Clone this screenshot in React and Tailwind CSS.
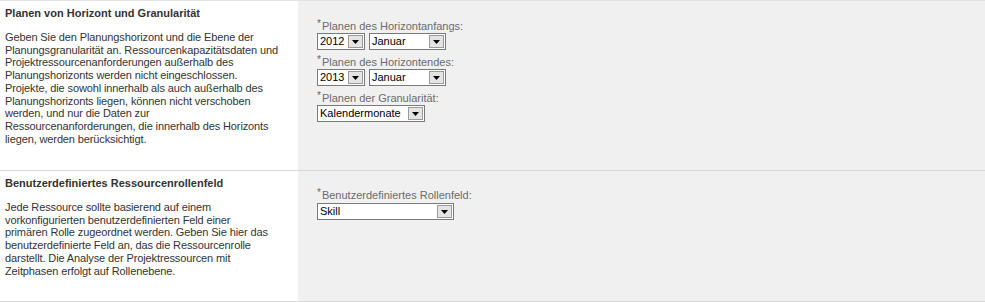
const Select = ({ value, width }) => (
  <div
    className={`flex h-[17px] items-center border border-[#7a7a7a] bg-white pl-[2px] pr-px ${width}`}
  >
    <span className="flex-1 text-[11px] leading-none text-black">{value}</span>
    <span className="flex h-[13px] w-[15px] items-center justify-center border border-[#9a9a9a] bg-[#e4e4e4]">
      <svg width="7" height="4" viewBox="0 0 7 4">
        <path d="M0 0h7L3.5 4z" fill="#000" />
      </svg>
    </span>
  </div>
);

const Label = ({ children }) => (
  <div className="flex items-start h-[14px] text-[11px] leading-[14px] text-[#6b6b6b]">
    <span className="mr-px text-[10px] leading-[10px] text-[#666]">*</span>
    {children}
  </div>
);

const Section = ({ title, lines, children, height }) => (
  <div className={`flex border-b border-[#d9d9d9] ${height}`}>
    <div className="w-[298px] shrink-0 bg-white pl-[5px] pt-[5px]">
      <h2 className="text-[11px] font-bold leading-[14px] text-[#333]">{title}</h2>
      <p className="mt-[11px] text-[11px] leading-[12.7px] tracking-[-0.12px] text-[#333]">
        {lines.map((l, i) => (
          <span key={i} className="block">
            {l}
          </span>
        ))}
      </p>
    </div>
    <div className="flex-1 bg-[#f0f0f0] pl-[19px] pt-[18px]">{children}</div>
  </div>
);

export default function App() {
  return (
    <div
      className="w-[985px] h-[302px] bg-[#f0f0f0] border-t border-[#e2e2e2]"
      style={{ fontFamily: '"Liberation Sans", Arial, sans-serif' }}
    >
      <Section
        height="h-[170px]"
        title="Planen von Horizont und Granularität"
        lines={[
          "Geben Sie den Planungshorizont und die Ebene der",
          "Planungsgranularität an. Ressourcenkapazitätsdaten und",
          "Projektressourcenanforderungen außerhalb des",
          "Planungshorizonts werden nicht eingeschlossen.",
          "Projekte, die sowohl innerhalb als auch außerhalb des",
          "Planungshorizonts liegen, können nicht verschoben",
          "werden, und nur die Daten zur",
          "Ressourcenanforderungen, die innerhalb des Horizonts",
          "liegen, werden berücksichtigt.",
        ]}
      >
        <div className="flex flex-col">
          <Label>Planen des Horizontanfangs:</Label>
          <div className="flex gap-[4px]">
            <Select value="2012" width="w-[48px]" />
            <Select value="Januar" width="w-[77px]" />
          </div>
          <div className="mt-[5px]">
            <Label>Planen des Horizontendes:</Label>
          </div>
          <div className="flex gap-[4px]">
            <Select value="2013" width="w-[48px]" />
            <Select value="Januar" width="w-[77px]" />
          </div>
          <div className="mt-[5px]">
            <Label>Planen der Granularität:</Label>
          </div>
          <div className="flex">
            <Select value="Kalendermonate" width="w-[108px]" />
          </div>
        </div>
      </Section>
      <Section
        height="h-[131px]"
        title="Benutzerdefiniertes Ressourcenrollenfeld"
        lines={[
          "Jede Ressource sollte basierend auf einem",
          "vorkonfigurierten benutzerdefinierten Feld einer",
          "primären Rolle zugeordnet werden. Geben Sie hier das",
          "benutzerdefinierte Feld an, das die Ressourcenrolle",
          "darstellt. Die Analyse der Projektressourcen mit",
          "Zeitphasen erfolgt auf Rollenebene.",
        ]}
      >
        <div className="-mt-px flex flex-col">
          <Label>Benutzerdefiniertes Rollenfeld:</Label>
          <div className="mt-px flex">
            <Select value="Skill" width="w-[137px]" />
          </div>
        </div>
      </Section>
    </div>
  );
}
